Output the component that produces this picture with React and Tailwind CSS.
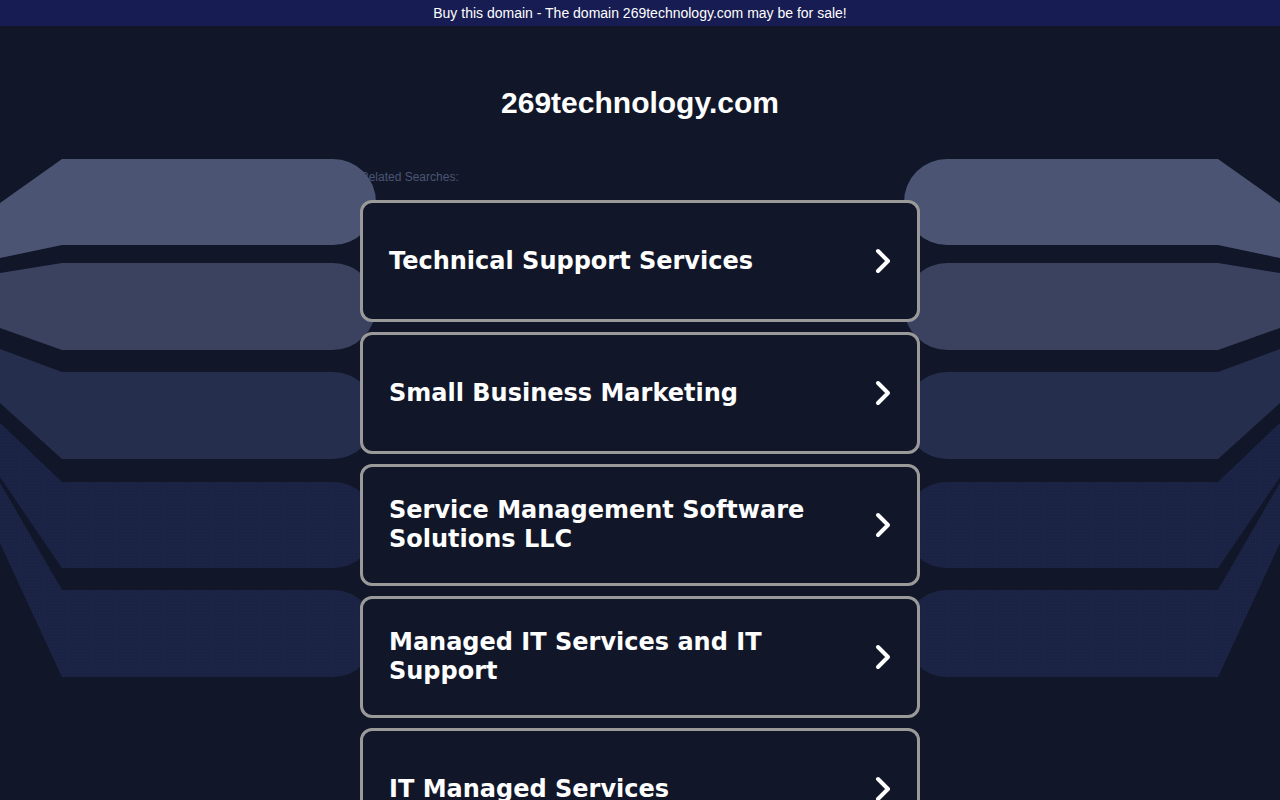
import React from "react";

const items = [
  "Technical Support Services",
  "Small Business Marketing",
  "Service Management Software Solutions LLC",
  "Managed IT Services and IT Support",
  "IT Managed Services",
];

// background bands: [topLeftY, topY, bottomY, bottomLeftY, fill, dotted]
const bands = [
  [203, 159, 245, 258, "#4b5573", false],
  [273, 263, 350, 328, "#3a4260", false],
  [349, 372, 459, 403, "#262e4d", false],
  [423, 482, 568, 477, "#1c2444", true],
  [483, 590, 677, 543, "#1a2244", true],
];

const Bands = ({ side }) => (
  <svg width="380" height="800" className="block">
    <defs>
      <pattern id={"dots-" + side} width="3" height="3" patternUnits="userSpaceOnUse">
        <rect width="3" height="3" fill="#1b2345" />
        <rect width="1" height="1" fill="#1f284b" />
      </pattern>
    </defs>
    <g transform={side === "right" ? "translate(380,0) scale(-1,1)" : ""}>
      {bands.map(([tl, t, b, bl, fill, dotted], i) => {
        const r = (b - t) / 2;
        const end = 376;
        const d = `M0 ${tl} L62 ${t} L${end - r} ${t} A${r} ${r} 0 0 1 ${end - r} ${b} L62 ${b} L0 ${bl} Z`;
        return <path key={i} d={d} fill={dotted ? `url(#dots-${side})` : fill} />;
      })}
    </g>
  </svg>
);

const Chevron = () => (
  <svg width="20" height="30" viewBox="0 0 20 30" className="shrink-0">
    <path d="M5 5 L15 15 L5 25" fill="none" stroke="white" strokeWidth="4" strokeLinecap="round" strokeLinejoin="round" />
  </svg>
);

export default function App() {
  return (
    <div className="relative h-[800px] overflow-hidden bg-[#111729] font-['Liberation_Sans',Arial,sans-serif]">
      <div className="h-[26px] bg-[#171c52] text-center text-[14px] leading-[26px] text-white">
        Buy this domain - The domain 269technology.com may be for sale!
      </div>

      <div className="absolute left-0 top-0 z-10">
        <Bands side="left" />
      </div>
      <div className="absolute right-0 top-0 z-10">
        <Bands side="right" />
      </div>

      <h1 className="pt-[59px] text-center text-[30px] font-bold leading-[36px] text-white">
        269technology.com
      </h1>

      <div className="mx-auto mt-[49px] w-[560px]">
        <div className="text-[12px] leading-[14px] text-[#4b5573]">Related Searches:</div>
        <div className="relative z-20 mt-[16px] flex flex-col gap-[10px]">
          {items.map((t) => (
            <div
              key={t}
              className="flex h-[122px] items-center justify-between rounded-[12px] border-[3px] border-[#9a9a9a] bg-[#111729] pl-[26px] pr-[24px]"
            >
              <span className="max-w-[440px] font-['DejaVu_Sans',Verdana,sans-serif] text-[24px] font-bold leading-[29px] text-white">
                {t}
              </span>
              <Chevron />
            </div>
          ))}
        </div>
      </div>
    </div>
  );
}
